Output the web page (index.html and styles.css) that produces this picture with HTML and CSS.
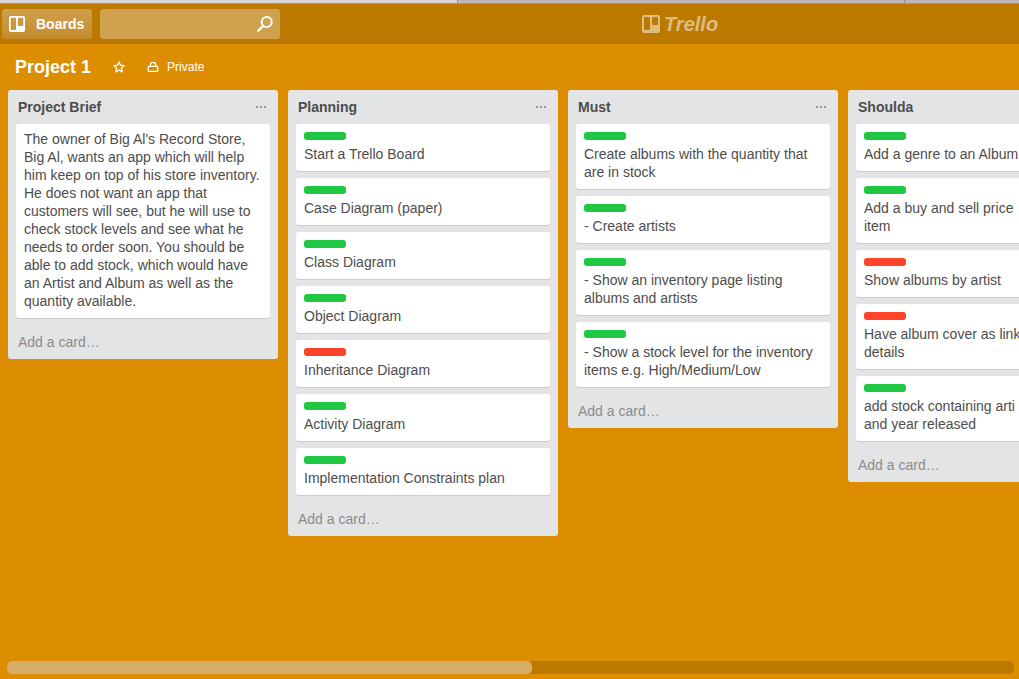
FILE: index.html
```html
<!DOCTYPE html>
<html lang="en">
<head>
<meta charset="utf-8">
<meta name="viewport" content="width=device-width, initial-scale=1">
<title>Project 1 | Trello</title>
<link rel="stylesheet" href="styles.css">
</head>
<body>
<div class="tabstrip"><span class="tab tab-active"></span><span class="tab tab-middle"></span><span class="tab"></span></div>
<header class="topbar">
  <button class="boards-button" type="button">
    <svg width="16" height="16" viewBox="0 0 16 16" aria-hidden="true"><path fill="#fff" fill-rule="evenodd" d="M2 0h12a2 2 0 0 1 2 2v12a2 2 0 0 1-2 2H2a2 2 0 0 1-2-2V2a2 2 0 0 1 2-2zM2.700 1.700a1 1 0 0 0-1 1v10.300a1 1 0 0 0 1 1h3.400a1 1 0 0 0 1-1V2.700a1 1 0 0 0-1-1zM9.900 1.700a1 1 0 0 0-1 1v6.200a1 1 0 0 0 1 1h3.400a1 1 0 0 0 1-1V2.700a1 1 0 0 0-1-1z"/></svg>
    <span>Boards</span>
  </button>
  <form class="search">
    <input class="search-input" type="text" aria-label="Search">
    <button class="search-button" type="button" aria-label="Search">
      <svg width="16" height="16" viewBox="0 0 16 16" fill="none" stroke="#fff" stroke-width="2" stroke-linecap="round" aria-hidden="true"><circle cx="9.7" cy="6.1" r="5"/><path d="M6 10 1.4 14.6" stroke-width="2.4"/></svg>
    </button>
  </form>
  <a class="logo" href="#">
    <svg width="18" height="18" viewBox="0 0 18 18" aria-hidden="true"><path fill="currentColor" fill-rule="evenodd" d="M2 0h14a2 2 0 0 1 2 2v14a2 2 0 0 1-2 2H2a2 2 0 0 1-2-2V2a2 2 0 0 1 2-2zM3.500 2a1.500 1.500 0 0 0-1.500 1.500v10a1.500 1.500 0 0 0 1.500 1.500h3a1.500 1.500 0 0 0 1.500-1.500v-10A1.500 1.500 0 0 0 6.500 2zM11.500 2a1.500 1.500 0 0 0-1.500 1.500v5a1.500 1.500 0 0 0 1.500 1.500h3a1.500 1.500 0 0 0 1.500-1.500v-5A1.500 1.500 0 0 0 14.500 2z"/></svg>
    <span>Trello</span>
  </a>
</header>
<div class="board-header">
  <h1 class="board-title">Project 1</h1>
  <button class="board-action" type="button" aria-label="Star this board">
    <svg width="12" height="12" viewBox="0 0 12 12" fill="none" stroke="#fff" stroke-width="1.3" stroke-linejoin="round" aria-hidden="true"><path d="M6 .9 7.5 4.2l3.7.4-2.8 2.5.8 3.8L6 9 2.8 10.900l.8-3.8L.8 4.600l3.700-.4z"/></svg>
  </button>
  <button class="board-action" type="button">
    <svg width="12" height="12" viewBox="0 0 12 12" fill="none" stroke="#fff" stroke-width="1.3" aria-hidden="true"><rect x="1.200" y="5.400" width="9.600" height="5" rx="1.200"/><path d="M3.200 5.400V4.200a2.800 2.800 0 0 1 5.600 0v1.200"/></svg>
    <span>Private</span>
  </button>
</div>
<main class="board">
  <section class="list">
    <div class="list-header"><h2>Project Brief</h2><button class="list-menu" type="button" aria-label="List menu"><i></i><i></i><i></i></button></div>
    <div class="cards">
      <article class="card">The owner of Big Al's Record Store, Big Al, wants an app which will help him keep on top of his store inventory. He does not want an app that customers will see, but he will use to check stock levels and see what he needs to order soon. You should be able to add stock, which would have an Artist and Album as well as the quantity available.</article>
    </div>
    <a class="add-card" href="#">Add a card…</a>
  </section>
  <section class="list">
    <div class="list-header"><h2>Planning</h2><button class="list-menu" type="button" aria-label="List menu"><i></i><i></i><i></i></button></div>
    <div class="cards">
      <article class="card"><span class="label green"></span>Start a Trello Board</article>
      <article class="card"><span class="label green"></span>Case Diagram (paper)</article>
      <article class="card"><span class="label green"></span>Class Diagram</article>
      <article class="card"><span class="label green"></span>Object Diagram</article>
      <article class="card"><span class="label red"></span>Inheritance Diagram</article>
      <article class="card"><span class="label green"></span>Activity Diagram</article>
      <article class="card"><span class="label green"></span>Implementation Constraints plan</article>
    </div>
    <a class="add-card" href="#">Add a card…</a>
  </section>
  <section class="list">
    <div class="list-header"><h2>Must</h2><button class="list-menu" type="button" aria-label="List menu"><i></i><i></i><i></i></button></div>
    <div class="cards">
      <article class="card"><span class="label green"></span>Create albums with the quantity that are in stock</article>
      <article class="card"><span class="label green"></span>- Create artists</article>
      <article class="card"><span class="label green"></span>- Show an inventory page listing albums and artists</article>
      <article class="card"><span class="label green"></span>- Show a stock level for the inventory items e.g. High/Medium/Low</article>
    </div>
    <a class="add-card" href="#">Add a card…</a>
  </section>
  <section class="list">
    <div class="list-header"><h2>Shoulda</h2><button class="list-menu" type="button" aria-label="List menu"><i></i><i></i><i></i></button></div>
    <div class="cards">
      <article class="card"><span class="label green"></span>Add a genre to an Album</article>
      <article class="card"><span class="label green"></span>Add a buy and sell price<br>item</article>
      <article class="card"><span class="label red"></span>Show albums by artist</article>
      <article class="card"><span class="label red"></span>Have album cover as link<br>details</article>
      <article class="card"><span class="label green"></span>add stock containing arti<br>and year released</article>
    </div>
    <a class="add-card" href="#">Add a card…</a>
  </section>
</main>
<div class="scrollbar"><div class="scrollbar-thumb"></div></div>
</body>
</html>
```
FILE: styles.css
```css
* {
  box-sizing: border-box;
}

body {
  margin: 0;
  height: 100vh;
  display: flex;
  flex-direction: column;
  overflow: hidden;
  background: #dd8e00;
  color: #4d4d4d;
  font: 14px/18px "Liberation Sans", Arial, sans-serif;
}

button {
  border: 0;
  padding: 0;
  background: none;
  color: inherit;
  font: inherit;
}

a {
  text-decoration: none;
}

svg {
  display: block;
  flex: none;
}

.tabstrip {
  display: flex;
  flex: none;
  height: 4px;
  border-bottom: 1px solid #999;
}

.tab {
  flex: 1;
  background: #b8b6ba;
}

.tab-active {
  flex: 0 0 44.9%;
  background: #d7d5d9;
  border-right: 1px solid #8e8c90;
}

.tab-middle {
  flex: 0 0 43.9%;
  border-right: 1px solid #8e8c90;
}

.topbar {
  display: flex;
  flex: none;
  align-items: center;
  height: 40px;
  padding: 0 2px;
  background: #bb7900;
}

.boards-button {
  display: flex;
  align-items: center;
  gap: 11px;
  width: 90px;
  height: 30px;
  padding-left: 7px;
  border-radius: 3px;
  background: linear-gradient(#cf9f4d, #c58c2c);
  color: #fff;
  font-weight: bold;
}

.search {
  display: flex;
  align-items: center;
  width: 180px;
  height: 30px;
  margin: 0 0 0 8px;
  padding-right: 7px;
  border-radius: 3px;
  background: #cfa04e;
}

.search-input {
  flex: 1;
  min-width: 0;
  height: 30px;
  padding: 0 8px;
  border: 0;
  outline: 0;
  background: none;
  color: #fff;
  font: inherit;
}

.logo {
  display: flex;
  align-items: center;
  gap: 4px;
  margin-left: 362px;
  color: #dfbb80;
  font-size: 20px;
  font-style: italic;
  font-weight: bold;
}

.board-header {
  display: flex;
  flex: none;
  align-items: center;
  gap: 22px;
  height: 46px;
  padding-left: 15px;
  color: #fff;
}

.board-title {
  margin: 0;
  font-size: 18px;
  line-height: 24px;
}

.board-action {
  display: flex;
  align-items: center;
  gap: 8px;
  font-size: 12px;
}

.board {
  display: flex;
  flex: 1;
  align-items: flex-start;
  gap: 10px;
  min-height: 0;
  padding: 0 8px;
  overflow: hidden;
}

.list {
  flex: 0 0 270px;
  border-radius: 3px;
  background: #e2e4e6;
}

.list-header {
  display: flex;
  align-items: center;
  justify-content: space-between;
  height: 34px;
  padding: 0 12px 0 10px;
}

.list-header h2 {
  margin: 0;
  font-size: 14px;
}

.list-menu {
  display: flex;
  gap: 2px;
}

.list-menu i {
  width: 2px;
  height: 2px;
  background: #999;
}

.cards {
  display: flex;
  flex-direction: column;
  gap: 7px;
  padding: 0 8px;
}

.card {
  padding: 6px 6px 8px 8px;
  border-radius: 3px;
  background: #fff;
  box-shadow: 0 1px 0 #ccc;
}

.label {
  display: block;
  width: 42px;
  height: 8px;
  margin: 2px 0 5px;
  border-radius: 3px;
}

.green {
  background: #1fc742;
}

.red {
  background: #ff432a;
}

.add-card {
  display: block;
  padding: 15px 10px 8px;
  color: #8c8c8c;
}

.scrollbar {
  flex: none;
  height: 13px;
  margin: 0 5px 5px 7px;
  border-radius: 5px;
  background: #bb7900;
}

.scrollbar-thumb {
  width: 52.1%;
  height: 100%;
  border-radius: 5px;
  background: #d6ae67;
}
```
